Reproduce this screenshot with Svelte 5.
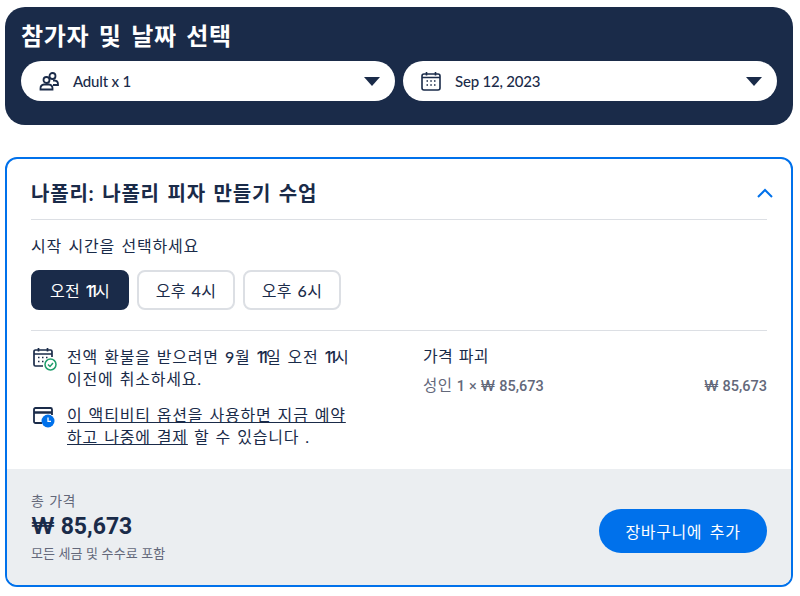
<script>
  const times = [['오전', '11'], ['오후', '4'], ['오후', '6']];
  let selected = 0;
</script>

<div class="page">
  <section class="picker">
    <h2>참가자 및 날짜 선택</h2>
    <div class="selects">
      <div class="select">
        <svg class="ico" width="20" height="20" viewBox="0 0 20 20" fill="none" stroke="#1a2b49" stroke-width="1.8">
          <circle cx="7.5" cy="9" r="3" />
          <circle cx="13.5" cy="5" r="3" />
          <path d="M1.5 18.5v-1.200c0-2.400 2-3.600 3.500-3.800h5c1.500.2 3.500 1.400 3.500 3.800v1.200z" />
          <path d="M14 9.500h1.500c2 .2 3.500 1.500 3.500 3.700v.8h-5" />
        </svg>
        <span class="val">Adult x 1</span>
        <span class="caret"></span>
      </div>
      <div class="select">
        <svg class="ico" width="20" height="20" viewBox="0 0 20 20" fill="none" stroke="#1a2b49" stroke-width="1.6">
          <rect x="1" y="3" width="18" height="16" rx="2" />
          <path d="M1 6.500h18M5.500 1v3.500M14.500 1v3.500" />
          <path d="M5.500 10h1.500M9.300 10h1.500M13 10h1.500M5.500 14h1.500M9.300 14h1.500M13 14h1.500" stroke-width="1.400" />
        </svg>
        <span class="val">Sep 12, 2023</span>
        <span class="caret"></span>
      </div>
    </div>
  </section>

  <section class="card">
    <div class="body">
      <header class="head">
        <h3>나폴리: 나폴리 피자 만들기 수업</h3>
        <svg class="chev" width="18" height="10" viewBox="0 0 18 10" fill="none" stroke="#0071eb" stroke-width="2">
          <path d="M2 9l7-7 7 7" />
        </svg>
      </header>

      <p class="label">시작 시간을 선택하세요</p>
      <div class="times">
        {#each times as t, i}
          <button class:on={i === selected} onclick={() => (selected = i)}>{t[0]} <span class="num" class:thin={t[1] === '11'}>{t[1]}</span>시</button>
        {/each}
      </div>

      <div class="details">
        <div class="notes">
          <div class="note">
            <svg width="24" height="24" viewBox="0 0 24 24" fill="none" stroke="#1a2b49" stroke-width="1.700">
              <path d="M10 19H2.500A1.500 1.500 0 0 1 1 17.500V4.500A1.500 1.500 0 0 1 2.500 3h15A1.500 1.500 0 0 1 19 4.500V10" />
              <path d="M1 7h18M5.500 1v3.500M14.500 1v3.500" />
              <path d="M5 10.500h1.500M9 10.500h1.500M13 10.500h1.500M5 14.500h1.500M9 14.500h1.500" stroke-width="1.500" />
              <circle cx="17.500" cy="17.500" r="5.500" fill="#fff" stroke="#1f9d6b" stroke-width="1.500" />
              <path d="M15 17.500l2 2 3-3.500" stroke="#1f9d6b" stroke-width="1.500" />
            </svg>
            <p>전액 환불을 받으려면 <span class="num">9</span>월 <span class="num thin">11</span>일 오전 <span class="num thin">11</span>시<br />이전에 취소하세요.</p>
          </div>
          <div class="note">
            <svg width="24" height="24" viewBox="0 0 24 24" fill="none" stroke="#1a2b49" stroke-width="1.800">
              <path d="M9 18H2.500A1.500 1.500 0 0 1 1 16.500V4.500A1.500 1.500 0 0 1 2.500 3h15A1.500 1.500 0 0 1 19 4.500V10" />
              <path d="M1 7.500h18" stroke-width="2.500" />
              <circle cx="15" cy="16" r="6.500" fill="#0071eb" stroke="none" />
              <path d="M15 12.500v3.800h3" stroke="#fff" stroke-width="1.300" />
            </svg>
            <p><a href="#pay">이 액티비티 옵션을 사용하면 지금 예약<br />하고 나중에 결제</a> 할 수 있습니다 .</p>
          </div>
        </div>
        <div class="breakdown">
          <div class="bd-title">가격 파괴</div>
          <div class="bd-row">
            <span><span class="han">성인</span> 1 <span class="times-sign">×</span> <span class="won">₩</span> 85,673</span>
            <span><span class="won">₩</span> 85,673</span>
          </div>
        </div>
      </div>
    </div>

    <footer class="foot">
      <div class="total">
        <div class="t-label">총 가격</div>
        <div class="t-price"><span class="won">₩</span> 85,673</div>
        <div class="t-note">모든 세금 및 수수료 포함</div>
      </div>
      <button class="add">장바구니에 추가</button>
    </footer>
  </section>
</div>

<style>
  :global(body) {
    margin: 0;
    background: #fff;
    font-family: Lato, "Noto Sans CJK KR", "Noto Sans", sans-serif;
    color: #1a2b49;
  }

  .page {
    padding: 7px 7px 0 5px;
    width: 788px;
  }

  .picker {
    background: #1a2b49;
    border-radius: 20px;
    height: 118px;
    padding: 14px 16px 0;
    box-sizing: border-box;
  }

  h2 {
    margin: 0;
    color: #fff;
    font-size: 24px;
    line-height: 30px;
    font-weight: 700;
    letter-spacing: 0.7px;
    word-spacing: 3px;
  }

  .selects {
    display: flex;
    gap: 8px;
    margin-top: 10px;
  }

  .select {
    flex: 1;
    height: 40px;
    background: #fff;
    border-radius: 20px;
    display: flex;
    align-items: center;
    padding: 0 15px 0 18px;
  }

  .ico {
    flex: none;
  }

  .val {
    flex: 1;
    margin-left: 14px;
    font-size: 15px;
    font-weight: 500;
    letter-spacing: -0.2px;
  }

  .caret {
    width: 0;
    height: 0;
    border-left: 8.5px solid transparent;
    border-right: 8.5px solid transparent;
    border-top: 9px solid #1a2b49;
  }

  .card {
    margin-top: 32px;
    height: 430px;
    box-sizing: border-box;
    border: 2px solid #0071eb;
    border-radius: 12px;
    overflow: hidden;
    display: flex;
    flex-direction: column;
  }

  .body {
    flex: 1;
    padding: 0 24px;
  }

  .head {
    height: 61px;
    display: flex;
    align-items: center;
    justify-content: space-between;
    border-bottom: 1px solid #dcdfe4;
    padding-top: 7px;
    box-sizing: border-box;
  }

  h3 {
    margin: 0;
    font-size: 20px;
    font-weight: 700;
    letter-spacing: 0.8px;
    word-spacing: 2px;
  }

  .chev {
    margin-right: -7px;
  }

  .label {
    margin: 15px 0 0;
    font-size: 16px;
    line-height: 22px;
    letter-spacing: 0.8px;
    word-spacing: 1.500px;
  }

  .times {
    display: flex;
    gap: 8px;
    margin-top: 13px;
    padding-bottom: 20px;
    border-bottom: 1px solid #dcdfe4;
  }

  .times button {
    width: 98px;
    height: 40px;
    border: 2px solid #dcdfe4;
    border-radius: 8px;
    background: #fff;
    color: #1a2b49;
    font: inherit;
    font-size: 16px;
    letter-spacing: 0.4px;
    word-spacing: 1px;
    padding: 0;
  }

  .times button.on {
    background: #1a2b49;
    border-color: #1a2b49;
    color: #fff;
  }

  .num {
    font-weight: 500;
  }

  .thin {
    font-family: Inter, sans-serif;
    letter-spacing: -2px;
  }

  .details {
    display: flex;
    justify-content: space-between;
    padding-top: 14px;
  }

  .notes {
    width: 316px;
    padding-top: 1px;
  }

  .note {
    display: flex;
    gap: 10px;
    margin-bottom: 14px;
  }

  .note svg {
    flex: none;
    margin-left: 2px;
    margin-top: 1px;
  }

  .note p {
    margin: 0;
    font-size: 16px;
    line-height: 22px;
    letter-spacing: 0.8px;
    word-spacing: 1.200px;
    white-space: nowrap;
  }

  a {
    color: inherit;
    text-underline-offset: 1px;
  }

  .breakdown {
    width: 344px;
  }

  .bd-title {
    font-size: 16px;
    line-height: 22px;
    letter-spacing: 0.4px;
    word-spacing: 1px;
  }

  .bd-row {
    display: flex;
    justify-content: space-between;
    margin-top: 8px;
    font-family: Roboto, "Noto Sans CJK KR", sans-serif;
    font-size: 14.500px;
    line-height: 22px;
    color: #63687a;
    font-weight: 500;
    word-spacing: 0.5px;
  }

  .han {
    font-size: 15.500px;
    font-weight: 400;
    letter-spacing: 0.5px;
  }

  .times-sign {
    font-weight: 400;
  }

  .won {
    font-family: Inter, sans-serif;
  }

  .foot {
    height: 116px;
    background: #ebeef1;
    display: flex;
    align-items: center;
    justify-content: space-between;
    padding: 0 24px 2px;
    box-sizing: border-box;
  }

  .t-label {
    font-size: 14px;
    line-height: 18px;
    color: #63687a;
    letter-spacing: 0.4px;
    word-spacing: 1px;
  }

  .t-price {
    font-family: Roboto, "Noto Sans CJK KR", sans-serif;
    font-size: 23px;
    line-height: 32px;
    font-weight: 700;
  }

  .t-note {
    margin-top: 2px;
    font-size: 13px;
    line-height: 16px;
    color: #63687a;
    letter-spacing: 0.1px;
  }

  .add {
    width: 168px;
    height: 44px;
    margin-top: 10px;
    border: 0;
    border-radius: 22px;
    background: #0071eb;
    color: #fff;
    font: inherit;
    font-size: 16px;
    letter-spacing: 0.6px;
    word-spacing: 3px;
    padding: 0;
  }
</style>
